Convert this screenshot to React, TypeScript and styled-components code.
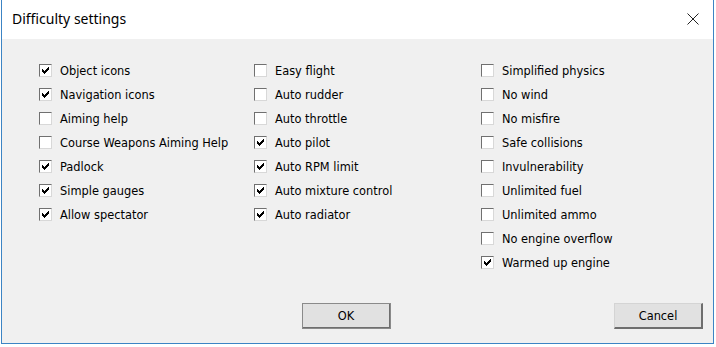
import React from "react";
import styled, { createGlobalStyle } from "styled-components";

const Global = createGlobalStyle`
  html, body { margin: 0; padding: 0; background: #ffffff; }
  body { width: 716px; height: 347px; overflow: hidden; }
`;

const Page = styled.div`
  width: 716px;
  height: 347px;
  padding-left: 1px;
  box-sizing: border-box;
  background: #ffffff;
`;

const Window = styled.div`
  width: 713px;
  height: 344px;
  box-sizing: border-box;
  border: 1px solid #3c84c4;
  border-top: none;
  display: flex;
  flex-direction: column;
  background: #f0f0f0;
`;

const TitleBar = styled.div`
  height: 37px;
  background: #ffffff;
  display: flex;
  align-items: center;
  justify-content: space-between;
  padding: 0 14px 2px 10px;
  flex-shrink: 0;
`;

const Title = styled.div`
  font-family: "Noto Sans", "Open Sans", sans-serif;
  font-size: 14px;
  color: #000;
`;

const Close = styled.div`
  width: 12px;
  height: 12px;
  display: flex;
`;

const Body = styled.div`
  flex: 1;
  display: flex;
  flex-direction: column;
  padding: 25px 0 0 37px;
`;

const Columns = styled.div`
  display: grid;
  grid-template-columns: 215px 227px 1fr;
`;

const Column = styled.div`
  display: flex;
  flex-direction: column;
  gap: 11px;
`;

const Row = styled.label`
  display: flex;
  align-items: center;
  height: 13px;
  gap: 8px;
  font-family: "DejaVu Sans", sans-serif;
  font-size: 11.4px;
  color: #000;
  white-space: nowrap;
`;

const Box = styled.span`
  width: 13px;
  height: 13px;
  box-sizing: border-box;
  background: #ffffff;
  border-top: 1px solid #707070;
  border-left: 1px solid #707070;
  border-right: 1px solid #d8d8d8;
  border-bottom: 1px solid #d8d8d8;
  display: flex;
  align-items: center;
  justify-content: center;
  flex-shrink: 0;
`;

const Buttons = styled.div`
  margin-top: auto;
  display: flex;
  justify-content: space-between;
  padding: 0 10px 14px 263px;
`;

const Button = styled.button<{ $default?: boolean }>`
  width: 89px;
  height: 26px;
  box-sizing: border-box;
  background: #e1e1e1;
  border-top: 1px solid #d4d4d4;
  border-left: 1px solid #d4d4d4;
  border-right: 2px solid #6e6e6e;
  border-bottom: 2px solid #6e6e6e;
  outline: ${(p) => (p.$default ? "1px solid #8a8a8a" : "none")};
  outline-offset: -1px;
  font-family: "DejaVu Sans", sans-serif;
  font-size: 11.4px;
  color: #000;
  padding: 0;
`;

const col1: [string, boolean][] = [
  ["Object icons", true],
  ["Navigation icons", true],
  ["Aiming help", false],
  ["Course Weapons Aiming Help", false],
  ["Padlock", true],
  ["Simple gauges", true],
  ["Allow spectator", true],
];
const col2: [string, boolean][] = [
  ["Easy flight", false],
  ["Auto rudder", false],
  ["Auto throttle", false],
  ["Auto pilot", true],
  ["Auto RPM limit", true],
  ["Auto mixture control", true],
  ["Auto radiator", true],
];
const col3: [string, boolean][] = [
  ["Simplified physics", false],
  ["No wind", false],
  ["No misfire", false],
  ["Safe collisions", false],
  ["Invulnerability", false],
  ["Unlimited fuel", false],
  ["Unlimited ammo", false],
  ["No engine overflow", false],
  ["Warmed up engine", true],
];

const Check = () => (
  <svg width="7" height="7" viewBox="0 0 7 7">
    <path d="M0 2h1v1h1v1h1v-1h1v-1h1v-1h1v-1h1v3h-1v1h-1v1h-1v1h-1v1h-1v-1h-1v-1h-1z" fill="#000" />
  </svg>
);

const Item = ({ label, on }: { label: string; on: boolean }) => (
  <Row>
    <Box>{on && <Check />}</Box>
    {label}
  </Row>
);

const List = ({ items }: { items: [string, boolean][] }) => (
  <Column>
    {items.map(([l, on]) => (
      <Item key={l} label={l} on={on} />
    ))}
  </Column>
);

export default function App() {
  return (
    <Page>
      <Global />
      <Window>
        <TitleBar>
          <Title>Difficulty settings</Title>
          <Close>
            <svg width="12" height="12" viewBox="0 0 12 12">
              <path d="M0.5 0.5L11.5 11.5M11.5 0.5L0.5 11.5" stroke="#222" strokeWidth="1" />
            </svg>
          </Close>
        </TitleBar>
        <Body>
          <Columns>
            <List items={col1} />
            <List items={col2} />
            <List items={col3} />
          </Columns>
          <Buttons>
            <Button $default>OK</Button>
            <Button>Cancel</Button>
          </Buttons>
        </Body>
      </Window>
    </Page>
  );
}
